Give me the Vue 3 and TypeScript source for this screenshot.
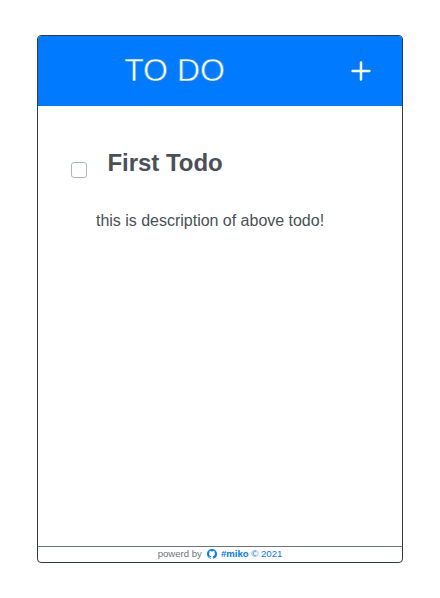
<script setup lang="ts">
import { ref } from 'vue'

interface Todo {
  id: number
  title: string
  description: string
  done: boolean
}

const todos = ref<Todo[]>([
  { id: 1, title: 'First Todo', description: 'this is description of above todo!', done: false },
])
</script>

<template>
  <main class="page">
    <section class="card">
      <header class="header">
        <h1 class="title">TO DO</h1>
        <button class="add" type="button">
          <svg width="20" height="20" viewBox="0 0 20 20" fill="none" stroke="#fff" stroke-width="2.5" stroke-linecap="round">
            <path d="M10 1.6v16.8M1.6 10h16.8" />
          </svg>
        </button>
      </header>
      <ul class="list">
        <li v-for="todo in todos" :key="todo.id" class="todo">
          <input v-model="todo.done" class="check" type="checkbox" />
          <h4 class="name">{{ todo.title }}</h4>
          <p class="description">{{ todo.description }}</p>
        </li>
      </ul>
      <footer class="footer">
        <span>powerd by</span>
        <svg class="github" width="10" height="10" viewBox="0 0 16 16" fill="currentColor">
          <path d="M8 0C3.580 0 0 3.580 0 8c0 3.540 2.290 6.530 5.470 7.590.4.070.55-.17.55-.38v-1.490c-2.010.37-2.530-.49-2.690-.94-.09-.23-.48-.94-.82-1.130-.28-.15-.68-.52-.01-.53.63-.01 1.080.58 1.230.82.72 1.210 1.870.87 2.330.66.070-.52.28-.87.51-1.070C4.700 11.200 3.300 10 3.300 7.500c0-.9.300-1.600.8-2.200-.1-.3-.36-1.200.08-2.300 0 0 .9-.15 2.300.8 1-.2 2.040-.2 3.040 0 1.400-.95 2.300-.8 2.300-.8.44 1.100.18 2 .08 2.300.5.6.8 1.300.8 2.200 0 2.500-1.400 3.700-3.270 4.030.29.25.54.73.54 1.480v2.200c0 .21.15.46.55.38A8.010 8.010 0 0 0 16 8c0-4.420-3.580-8-8-8z" />
        </svg>
        <span class="credit"><b>#miko</b> © 2021</span>
      </footer>
    </section>
  </main>
</template>

<style>
body {
  background: #fff;
}
</style>

<style scoped>
.page {
  box-sizing: border-box;
  height: 598px;
  padding: 35px 37px;
  font-family: "Liberation Sans", Arial, sans-serif;
  color: #495057;
}
.card {
  box-sizing: border-box;
  display: flex;
  flex-direction: column;
  height: 528px;
  border: 1px solid #343a40;
  border-radius: 4px;
  overflow: hidden;
}
.header {
  display: grid;
  grid-template-columns: 273px 1fr;
  align-items: center;
  height: 70px;
  flex: none;
  background: #007bff;
}
.title {
  margin: 0 0 3px;
  font-size: 32px;
  font-weight: 400;
  line-height: 38px;
  text-align: center;
  color: #fff;
  -webkit-text-stroke: 0.5px #007bff;
}
.add {
  display: flex;
  justify-self: start;
  margin-left: 40px;
  padding: 0;
  border: 0;
  background: none;
}
.list {
  flex: 1;
  margin: 0;
  padding: 42px 33px 0;
  list-style: none;
}
.todo {
  display: grid;
  grid-template-columns: 16px 1fr;
  column-gap: 20.5px;
}
.check {
  appearance: none;
  box-sizing: border-box;
  width: 16px;
  height: 16px;
  margin: 14px 0 0;
  border: 1px solid #adb5bd;
  border-radius: 3px;
  background: #fff;
}
.name {
  margin: 0;
  font-size: 24px;
  line-height: 29px;
  letter-spacing: -0.04px;
}
.description {
  grid-column: 1 / -1;
  margin: 31px 0 0 25px;
  font-size: 16px;
  line-height: 24px;
  letter-spacing: -0.015px;
}
.footer {
  display: flex;
  align-items: center;
  justify-content: center;
  height: 15px;
  flex: none;
  border-top: 1px solid #6c757d;
  font-size: 9.6px;
  line-height: 15px;
  color: #6c757d;
}
.footer span {
  margin-top: -2px;
}
.github {
  margin: -1px 4px 0 5px;
  color: #007bff;
}
.credit {
  color: #007bff;
}
</style>
